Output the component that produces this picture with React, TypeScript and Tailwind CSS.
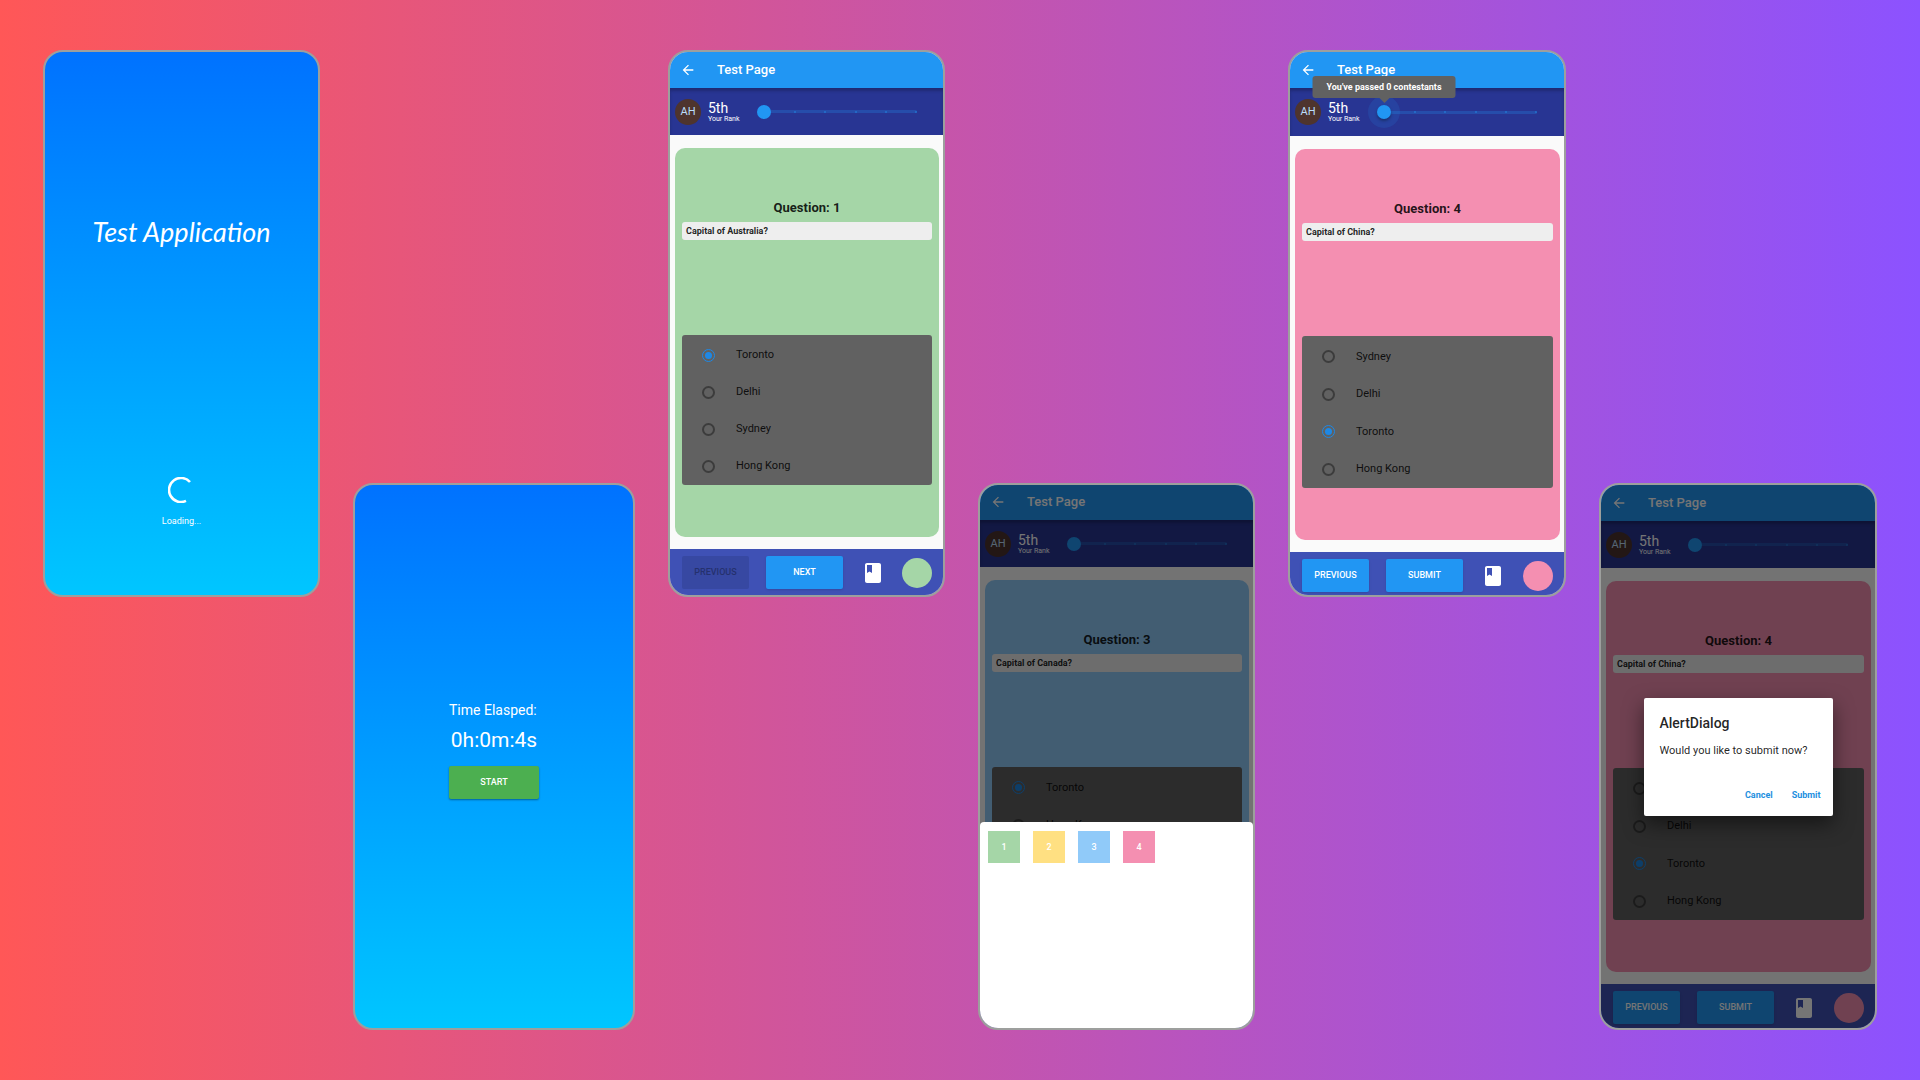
import React from "react";
import { MdArrowBack, MdBook } from "react-icons/md";

type Tone = "green" | "blue" | "pink";

const cardTone: Record<Tone, string> = {
  green: "bg-[#a5d6a7]",
  blue: "bg-[#90caf9]",
  pink: "bg-[#f48fb1]",
};

function Phone({
  low = false,
  className = "",
  children,
}: {
  low?: boolean;
  className?: string;
  children: React.ReactNode;
}) {
  return (
    <section
      className={`relative flex h-[547px] min-w-0 flex-col overflow-hidden rounded-[20px] border-2 border-[#9d9f9d] ${
        low ? "self-end" : "self-start"
      } ${className}`}
    >
      {children}
    </section>
  );
}

function RankSlider({ label, tooltip }: { label: string; tooltip?: string }) {
  return (
    <div className="relative ml-[18px] flex h-8 w-[167px] items-center">
      <div className="absolute inset-x-[7px] flex h-[3px] items-center justify-between rounded-full bg-[#2196f3]/25">
        {[0, 1, 2, 3, 4, 5].map((i) => (
          <span key={i} className="size-[2px] rounded-full bg-[#2196f3]/50" />
        ))}
      </div>
      <input
        type="range"
        aria-label={label}
        min={0}
        max={5}
        defaultValue={0}
        className={`relative h-[14px] w-full appearance-none bg-transparent [&::-webkit-slider-thumb]:size-[14px] [&::-webkit-slider-thumb]:appearance-none [&::-webkit-slider-thumb]:rounded-full [&::-webkit-slider-thumb]:bg-[#2196f3] ${
          tooltip
            ? "[&::-webkit-slider-thumb]:shadow-[0_0_0_9px_rgba(33,150,243,0.14),0_2px_3px_rgba(0,0,0,0.4)]"
            : ""
        }`}
      />
      {tooltip && (
        <div
          role="tooltip"
          className="absolute bottom-[30px] left-[7px] z-20 flex h-[22px] w-[143px] -translate-x-1/2 items-center justify-center rounded-[3px] bg-[#616161] pt-px text-[9px] font-bold whitespace-nowrap text-white"
        >
          {tooltip}
          <span className="absolute top-full left-1/2 -translate-x-1/2 border-x-[5px] border-t-[5px] border-x-transparent border-t-[#616161]" />
        </div>
      )}
    </div>
  );
}

type QuizProps = {
  id: string;
  tone: Tone;
  number: number;
  question: string;
  options: string[];
  selected: string;
  action: string;
  previousDisabled?: boolean;
  tooltip?: string;
  barClass?: string;
  rankClass?: string;
  optionsClass?: string;
  navClass?: string;
};

function Quiz({
  id,
  tone,
  number,
  question,
  options,
  selected,
  action,
  previousDisabled = false,
  tooltip,
  barClass = "h-[36px]",
  rankClass = "h-[47px]",
  optionsClass = "h-[152px]",
  navClass = "h-[44px]",
}: QuizProps) {
  return (
    <div className="flex flex-1 flex-col bg-[#fafafa]">
      <header className={`relative flex shrink-0 items-center bg-[#2196f3] pl-[10px] text-white ${barClass}`}>
        <button type="button" aria-label="Back" className="flex">
          <MdArrowBack className="size-[16px]" />
        </button>
        <h2 className="ml-[21px] text-[13px] leading-4 font-medium">Test Page</h2>
      </header>

      <div
        className={`relative flex shrink-0 items-center bg-[#283593] pl-[5px] text-white shadow-[inset_0_3px_3px_rgba(0,0,0,0.22)] ${rankClass}`}
      >
        <div className="flex size-[26px] items-center justify-center rounded-full bg-[#4e342e] pt-px text-[11px] text-[#bbdefb]">
          AH
        </div>
        <div className="ml-[7px] w-[31px] pt-px whitespace-nowrap">
          <p className="text-[14px] leading-[14px]">5th</p>
          <p className="text-[7px] leading-[9px]">Your Rank</p>
        </div>
        <RankSlider label={`Progress on question ${number}`} tooltip={tooltip} />
      </div>

      <main
        className={`mr-[4px] mt-[13px] mb-[12px] ml-[5px] flex flex-1 flex-col rounded-[10px] px-[7px] pt-[50px] text-black/87 ${cardTone[tone]}`}
      >
        <h3 className="text-center text-[13px] leading-5 font-bold">Question: {number}</h3>
        <p className="mt-1 flex h-[18px] items-center rounded-[3px] bg-[#eeeeee] pt-px pl-[4px] text-[9px] font-bold">
          {question}
        </p>
        <div
          role="radiogroup"
          aria-label={question}
          className={`mt-[95px] flex flex-col rounded-[3px] bg-[#616161] pt-[2px] ${optionsClass}`}
        >
          {options.map((option) => (
            <label key={option} className="flex flex-1 items-center pl-[20px] text-[11px]">
              <input
                type="radio"
                name={`answer-${id}`}
                defaultChecked={option === selected}
                className="mr-[21px] size-[13px] appearance-none rounded-full border-2 border-[#3c3c3c] bg-clip-content p-[2px] checked:border checked:border-[#1e88e5] checked:bg-[#1e88e5]"
              />
              {option}
            </label>
          ))}
        </div>
      </main>

      <nav className={`flex shrink-0 items-start bg-[#3f51b5] pt-[7px] pr-[11px] pl-[12px] ${navClass}`}>
        <button
          type="button"
          disabled={previousDisabled}
          className="h-[33px] w-[67px] rounded-[2px] bg-[#2196f3] pt-px text-[9px] font-medium text-white shadow-sm disabled:bg-[#3748a2] disabled:text-[#25316e] disabled:shadow-none"
        >
          PREVIOUS
        </button>
        <button
          type="button"
          className="ml-[17px] h-[33px] w-[77px] rounded-[2px] bg-[#2196f3] pt-px text-[9px] font-medium text-white shadow-sm"
        >
          {action}
        </button>
        <div className="flex h-[33px] flex-1 items-center justify-between pl-[18px]">
          <button type="button" aria-label="Question list" className="flex text-white">
            <MdBook className="size-[24px]" />
          </button>
          <span className={`size-[30px] rounded-full ${cardTone[tone]}`} />
        </div>
      </nav>
    </div>
  );
}

const tiles = [
  { n: 1, tone: "bg-[#a5d6a7]" },
  { n: 2, tone: "bg-[#ffe082]" },
  { n: 3, tone: "bg-[#90caf9]" },
  { n: 4, tone: "bg-[#f48fb1]" },
];

export default function App() {
  return (
    <div className="grid min-h-screen grid-cols-[277fr_282fr_277fr_277fr_278fr_278fr] gap-x-[33px] bg-linear-to-r/srgb from-[#ff5757] to-[#8c52ff] px-[43px] py-[50px] font-['Roboto',sans-serif]">
      <Phone className="items-center bg-linear-to-b/srgb from-[#0072ff] to-[#00c6ff] text-white">
        <h1 className="mt-[160px] font-['Lato',cursive] text-[27px] leading-10 whitespace-nowrap italic">
          Test Application
        </h1>
        <div className="mt-auto mb-[68px] flex flex-col items-center">
          <svg viewBox="0 0 26 26" className="size-[26px]" fill="none" stroke="white" strokeWidth="2.6" aria-hidden="true">
            <path d="M22 5A12 12 0 1 0 18 23.9" />
          </svg>
          <p className="mt-[12px] text-[9px] leading-3">Loading...</p>
        </div>
      </Phone>

      <Phone low className="items-center bg-linear-to-b/srgb from-[#0072ff] to-[#00c6ff] text-white">
        <div className="mt-[215px] flex w-[90px] flex-col whitespace-nowrap">
          <p className="text-[14px] leading-5">Time Elasped:</p>
          <p className="mt-[8px] text-center text-[21px] leading-6">0h:0m:4s</p>
          <button
            type="button"
            className="mt-[14px] h-[33px] rounded-[2px] bg-[#4caf50] text-[9px] font-medium shadow-[0_1px_2px_rgba(0,0,0,0.4)]"
          >
            START
          </button>
        </div>
      </Phone>

      <Phone>
        <Quiz
          id="australia"
          tone="green"
          number={1}
          question="Capital of Australia?"
          options={["Toronto", "Delhi", "Sydney", "Hong Kong"]}
          selected="Toronto"
          action="NEXT"
          previousDisabled
          optionsClass="h-[150px]"
          navClass="h-[46px]"
        />
      </Phone>

      <Phone low>
        <Quiz
          id="canada"
          tone="blue"
          number={3}
          question="Capital of Canada?"
          options={["Toronto", "Hong Kong", "Sydney", "Delhi"]}
          selected="Toronto"
          action="NEXT"
          barClass="h-[35px] pb-[2px]"
        />
        <div className="absolute inset-0 flex flex-col justify-end bg-black/54">
          <div className="flex h-[206px] items-start gap-[13px] rounded-t-[4px] bg-white px-[8px] pt-[9px]">
            {tiles.map((t) => (
              <button key={t.n} type="button" className={`size-[32px] pt-px text-[9px] font-medium text-white ${t.tone}`}>
                {t.n}
              </button>
            ))}
          </div>
        </div>
      </Phone>

      <Phone>
        <Quiz
          id="china"
          tone="pink"
          number={4}
          question="Capital of China?"
          options={["Sydney", "Delhi", "Toronto", "Hong Kong"]}
          selected="Toronto"
          action="SUBMIT"
          tooltip="You've passed 0 contestants"
          rankClass="h-[48px]"
          navClass="h-[43px]"
        />
      </Phone>

      <Phone low>
        <Quiz
          id="china-submit"
          tone="pink"
          number={4}
          question="Capital of China?"
          options={["Sydney", "Delhi", "Toronto", "Hong Kong"]}
          selected="Toronto"
          action="SUBMIT"
        />
        <div className="absolute inset-0 flex items-center justify-center bg-black/54">
          <div
            role="dialog"
            aria-labelledby="dialog-title"
            className="flex h-[118px] w-[189px] flex-col rounded-[2px] bg-white px-4 pt-[15px] text-black/87 shadow-[0_8px_20px_rgba(0,0,0,0.5)]"
          >
            <h2 id="dialog-title" className="text-[14px] leading-5 font-medium">
              AlertDialog
            </h2>
            <p className="mt-[10px] text-[11px] leading-4 whitespace-nowrap">Would you like to submit now?</p>
            <div className="mt-[28px] -mr-1 flex justify-end gap-[19px] text-[9px] leading-4 font-bold text-[#1e90e0]">
              <button type="button">Cancel</button>
              <button type="button">Submit</button>
            </div>
          </div>
        </div>
      </Phone>
    </div>
  );
}
